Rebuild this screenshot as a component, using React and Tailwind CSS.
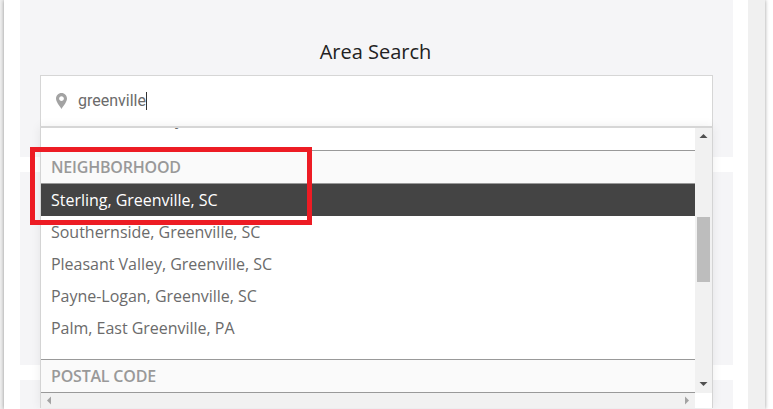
import React from 'react';

const openSans = { fontFamily: '"Open Sans", sans-serif' };

function Row({ label, active }) {
  return (
    <div className={`h-8 pl-[10px] flex items-center text-base tracking-[-0.02px] whitespace-nowrap ${active ? 'bg-[#444444] text-white' : 'text-[#6b6b6b]'}`}>
      {label}
    </div>
  );
}

function Group({ title }) {
  return (
    <div className="h-[34px] pl-[10px] flex items-center bg-[#fafafa] border-y border-[#999999] text-base font-semibold tracking-[-0.2px] text-[#999999]">
      {title}
    </div>
  );
}

function Arrow({ d, fill, className }) {
  return (
    <svg width="9" height="7" viewBox="0 0 9 7" className={className}>
      <path d={d} fill={fill} />
    </svg>
  );
}

function Dropdown() {
  return (
    <div className="absolute -left-px -right-px top-full h-[282px] flex flex-col bg-white border-x border-t-2 border-t-[#d6d6d6] border-x-[#d4d4d4] shadow-[0_0_10px_rgba(0,0,0,0.07)] z-10">
      <div className="flex h-[265px]">
        <div className="flex-1 overflow-hidden">
          <div className="-mt-[25px]" style={openSans}>
            <Row label="Greenville County, SC" />
            <div className="h-[15px]" />
            <Group title="NEIGHBORHOOD" />
            <Row label="Sterling, Greenville, SC" active />
            <Row label="Southernside, Greenville, SC" />
            <Row label="Pleasant Valley, Greenville, SC" />
            <Row label="Payne-Logan, Greenville, SC" />
            <Row label="Palm, East Greenville, PA" />
            <div className="h-[15px]" />
            <Group title="POSTAL CODE" />
          </div>
        </div>
        <div className="w-[17px] shrink-0 flex flex-col items-center bg-[#f1f1f1]">
          <Arrow d="M4.5 1 L8.5 5 L0.5 5 Z" fill="#505050" className="mt-[5px]" />
          <div className="mt-[77px] w-[13px] h-[65px] bg-[#bdbdbd]" />
          <Arrow d="M0.5 1 L8.5 1 L4.5 5 Z" fill="#505050" className="mt-auto mb-[5px]" />
        </div>
      </div>
      <div className="flex flex-1">
        <div className="flex-1 flex items-center justify-between px-[5px] bg-[#f1f1f1]">
          <svg width="6" height="9" viewBox="0 0 6 9"><path d="M5 0.5 L5 8.5 L1 4.5 Z" fill="#a3a3a3" /></svg>
          <svg width="6" height="9" viewBox="0 0 6 9"><path d="M1 0.5 L1 8.5 L5 4.5 Z" fill="#a3a3a3" /></svg>
        </div>
        <div className="w-[17px] shrink-0 bg-white" />
      </div>
    </div>
  );
}

export default function App() {
  return (
    <div className="relative flex w-[773px] h-[409px] overflow-hidden bg-white">
      <div className="w-1 shrink-0 bg-[#f0f0f0]" />
      <div className="w-[761px] shrink-0 flex pl-4 shadow-[0_0_4px_rgba(0,0,0,0.4)]">
        <div className="w-[713px] shrink-0 flex flex-col gap-[15px]">
          <div className="h-[157px] shrink-0 px-5 pt-[38px] bg-[#f5f5f7]">
            <h2 className="h-[37px] pr-[2px] text-center text-[20px] leading-[28px] text-[#222222]" style={openSans}>Area Search</h2>
            <div className="relative h-[52px] flex items-center bg-white border border-[#d6d6d6]">
              <svg width="11" height="16" viewBox="0 0 11 16" className="ml-[15px]">
                <path fillRule="evenodd" d="M5.5 0 C8.7 0 11 2.5 11 5.6 C11 8.8 7.8 12.6 5.5 16 C3.2 12.6 0 8.8 0 5.6 C0 2.5 2.3 0 5.5 0 Z M5.5 3.2 C4.2 3.2 3.1 4.3 3.1 5.6 C3.1 6.9 4.2 8 5.5 8 C6.8 8 7.9 6.9 7.9 5.6 C7.9 4.3 6.8 3.2 5.5 3.2 Z" fill="#a3a3a3" />
              </svg>
              <span className="ml-[11px] text-base leading-[18px] text-[#6b6b6b] border-r border-[#333333]" style={{ fontFamily: 'Roboto, sans-serif' }}>greenville</span>
              <Dropdown />
            </div>
          </div>
          <div className="h-[193px] shrink-0 bg-[#f5f5f7]" />
          <div className="flex-1 bg-[#f5f5f7]" />
        </div>
        <div className="ml-[15px] w-[17px] shrink-0 bg-[#f0f0f0]" />
      </div>
      {/* red annotation box */}
      <div className="absolute left-[30px] top-[147px] w-[282px] h-[78px] border-[5px] border-[#ed1c24] z-20" />
    </div>
  );
}
